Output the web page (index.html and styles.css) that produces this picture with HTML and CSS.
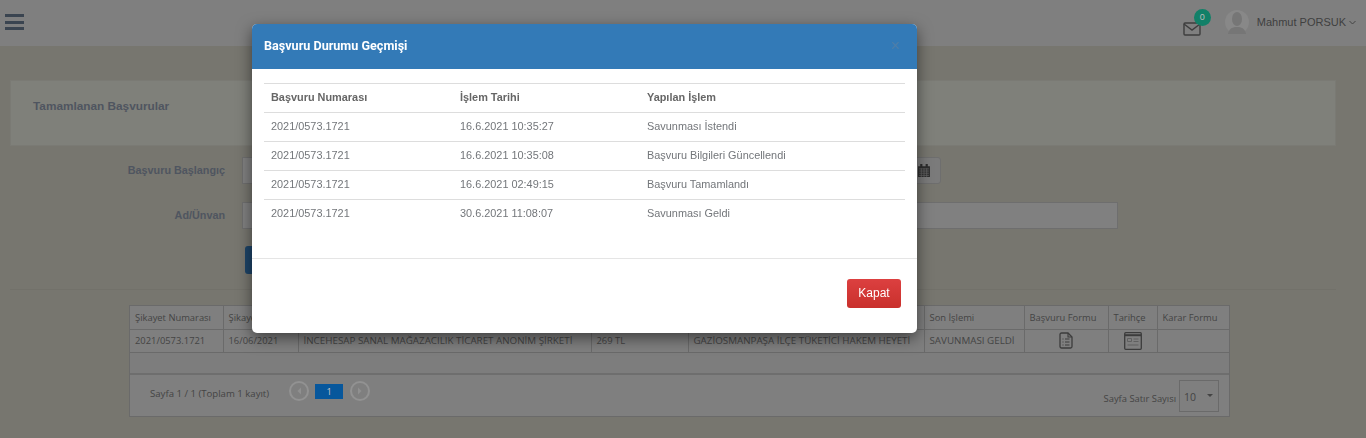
FILE: index.html
```html
<!doctype html>
<html>
<head>
	<meta charset="utf-8">
	<title>Tamamlanan Başvurular</title>
	<link rel="stylesheet" href="styles.css">
</head>
<body>
	<header class="topbar">
		<div class="menu-icon"><span></span><span></span><span></span></div>
		<div class="topbar-right">
			<div class="mail">
				<svg width="18" height="14" viewBox="0 0 18 14"><rect x="1" y="1" width="16" height="12" rx="1" fill="none" stroke="#3e3e3e" stroke-width="1.4"/><path d="M1 2l8 6 8-6" fill="none" stroke="#3e3e3e" stroke-width="1.4"/></svg>
				<span class="mail-badge">0</span>
			</div>
			<svg class="avatar" width="24" height="26" viewBox="0 0 24 26"><circle cx="12" cy="13" r="12" fill="#888"/><ellipse cx="12" cy="10" rx="5" ry="7" fill="#767676"/><path d="M3 25c1-6 5-7 9-7s8 1 9 7z" fill="#767676"/></svg>
			<span class="user-name">Mahmut PORSUK</span>
			<svg class="caret" width="7" height="5" viewBox="0 0 7 5"><path d="M.5 1l3 3 3-3" fill="none" stroke="#444"/></svg>
		</div>
	</header>

	<main class="content">
		<div class="page-title"><h2>Tamamlanan Başvurular</h2></div>

		<form class="filter">
			<div class="filter-row">
				<label>Başvuru Başlangıç</label>
				<div class="input date-input"></div>
				<span class="date-btn">
					<svg width="12" height="13" viewBox="0 0 11 12"><path d="M2 0h2v2h3V0h2v2h2v10H0V2h2z" fill="#2e2e2e"/><path d="M1 4.500h9M1 6.500h9M1 8.500h9M1 10.500h9M3 4v8M5.500 4v8M8 4v8" stroke="#666" stroke-width=".7"/></svg>
				</span>
			</div>
			<div class="filter-row">
				<label>Ad/Ünvan</label>
				<div class="input wide-input"></div>
			</div>
			<div class="filter-row">
				<label></label>
				<span class="search-btn"></span>
			</div>
		</form>

		<div class="grid-wrap">
			<div class="grid">
				<table>
					<tr>
						<th class="c1">Şikayet Numarası</th>
						<th class="c2">Şikayet Tarihi</th>
						<th class="c3">Firma</th>
						<th class="c4">Tutar</th>
						<th class="c5">Hakem Heyeti</th>
						<th class="c6">Son İşlemi</th>
						<th class="c7">Başvuru Formu</th>
						<th class="c8">Tarihçe</th>
						<th class="c9">Karar Formu</th>
					</tr>
					<tr>
						<td>2021/0573.1721</td>
						<td>16/06/2021</td>
						<td class="upper">İNCEHESAP SANAL MAĞAZACILIK TİCARET ANONİM ŞİRKETİ</td>
						<td>269 TL</td>
						<td class="upper">GAZİOSMANPAŞA İLÇE TÜKETİCİ HAKEM HEYETİ</td>
						<td class="upper">SAVUNMASI GELDİ</td>
						<td class="icon-cell">
							<svg width="14" height="17" viewBox="0 0 14 17"><path d="M1 2.500A1.500 1.500 0 0 1 2.500 1H9l4 4v9.500A1.500 1.500 0 0 1 11.500 16h-9A1.500 1.500 0 0 1 1 14.500z" fill="none" stroke="#3c3c3c" stroke-width="1.300"/><path d="M9 1v4h4M3.500 7h1M6 7h4.500M3.500 10h1M6 10h4.500M3.500 13h1M6 13h4.500" fill="none" stroke="#3c3c3c" stroke-width="1.100"/></svg>
						</td>
						<td class="icon-cell">
							<svg width="18" height="18" viewBox="0 0 18 18"><rect x=".7" y=".7" width="16.600" height="16.600" rx="1" fill="none" stroke="#3c3c3c" stroke-width="1.300"/><path d="M1 3.200h16" stroke="#3c3c3c" stroke-width="2"/><path d="M3.500 6.500h4v3h-4zM9.500 7h5M9.500 9.500h5M3.500 13h11" fill="none" stroke="#606060" stroke-width="1"/></svg>
						</td>
						<td></td>
					</tr>
				</table>
				<div class="grid-spacer"></div>
				<div class="pager">
					<span class="pager-info">Sayfa 1 / 1 (Toplam 1 kayıt)</span>
					<span class="pager-arrow"><svg width="6" height="8" viewBox="0 0 6 8"><path d="M5 .5L1.500 4 5 7.500z" fill="#909090"/></svg></span>
					<span class="pager-current">1</span>
					<span class="pager-arrow"><svg width="6" height="8" viewBox="0 0 6 8"><path d="M1 .5L4.500 4 1 7.500z" fill="#909090"/></svg></span>
					<span class="pager-size-label">Sayfa Satır Sayısı</span>
					<span class="pager-size">10<i class="select-caret"></i></span>
				</div>
			</div>
		</div>
	</main>

	<div class="modal">
		<div class="modal-header">
			<h4>Başvuru Durumu Geçmişi</h4>
			<span class="modal-close">×</span>
		</div>
		<div class="modal-body">
			<table class="history">
				<tr><th class="h1">Başvuru Numarası</th><th class="h2">İşlem Tarihi</th><th>Yapılan İşlem</th></tr>
				<tr><td>2021/0573.1721</td><td>16.6.2021 10:35:27</td><td>Savunması İstendi</td></tr>
				<tr><td>2021/0573.1721</td><td>16.6.2021 10:35:08</td><td>Başvuru Bilgileri Güncellendi</td></tr>
				<tr><td>2021/0573.1721</td><td>16.6.2021 02:49:15</td><td>Başvuru Tamamlandı</td></tr>
				<tr><td>2021/0573.1721</td><td>30.6.2021 11:08:07</td><td>Savunması Geldi</td></tr>
			</table>
		</div>
		<div class="modal-footer">
			<span class="btn-close">Kapat</span>
		</div>
	</div>
</body>
</html>
```

FILE: styles.css
```css
/* page is drawn with the dimmed colours of the open modal */
html, body {
	margin: 0;
	height: 438px;
	overflow: hidden;
}
body {
	background: #77766f;
	font-family: "Liberation Sans", Arial, sans-serif;
	font-size: 12px;
	color: #333;
}
.topbar {
	height: 46px;
	background: #7f7f7f;
	display: flex;
	justify-content: space-between;
	box-sizing: border-box;
}
.menu-icon {
	padding: 14px 0 0 5px;
}
.menu-icon span {
	display: block;
	width: 19px;
	height: 3px;
	background: #3a4450;
	margin-bottom: 3.5px;
}
.topbar-right {
	display: flex;
	align-items: center;
	height: 44px;
	padding-right: 10px;
}
.mail {
	position: relative;
	width: 18px;
	height: 14px;
	margin: 13px 24px 0 0;
}
.mail svg {
	display: block;
}
.mail-badge {
	position: absolute;
	left: 11px;
	top: -13px;
	width: 17px;
	height: 17px;
	border-radius: 50%;
	background: #128068;
	color: #bbb;
	font-size: 9px;
	line-height: 17px;
	text-align: center;
}
.avatar {
	margin-right: 8px;
}
.user-name {
	font-size: 11px;
	color: #404040;
	margin-right: 3px;
}
.content {
	padding: 34px 30px 0 10px;
}
.page-title {
	height: 66px;
	background: #7f807a;
	border: 1px solid #7a7a74;
	box-sizing: border-box;
	padding: 17px 22px;
}
.page-title h2 {
	margin: 0;
	font-size: 11.8px;
	line-height: 16px;
	color: #4f5560;
}
.filter {
	padding-top: 11px;
	height: 144px;
	box-sizing: border-box;
	border-bottom: 1px solid #72716a;
}
.filter-row {
	display: flex;
	margin-bottom: 18px;
	height: 27px;
}
.filter-row label {
	width: 215px;
	text-align: right;
	font-size: 10.8px;
	font-weight: bold;
	line-height: 26px;
	color: #4f5560;
	margin-right: 17px;
}
.input {
	height: 27px;
	background: #808080;
	border: 1px solid #6e6e6e;
	box-sizing: border-box;
}
.date-input {
	width: 665px;
}
.wide-input {
	width: 876px;
}
.date-btn {
	width: 34px;
	height: 27px;
	background: #7b7b7b;
	border: 1px solid #6e6e6e;
	border-radius: 0 3px 3px 0;
	box-sizing: border-box;
	display: flex;
	align-items: center;
	justify-content: center;
}
.search-btn {
	width: 40px;
	height: 28px;
	margin: -1px 0 0 3px;
	background: #1d4468;
	border-radius: 3px;
}
.grid-wrap {
	padding: 15px 0 0 119px;
}
.grid {
	width: 1101px;
	height: 112px;
	box-sizing: border-box;
	background: #7f7f7f;
	border: 1px solid #6a6a6a;
	font-family: "Open Sans", sans-serif;
	font-size: 9.4px;
	color: #444;
}
.grid table {
	border-collapse: collapse;
	table-layout: fixed;
	width: 1099px;
}
.grid th, .grid td {
	box-sizing: border-box;
	height: 23px;
	border: 1px solid #6a6a6a;
	font-weight: normal;
	padding: 0 5px;
	white-space: nowrap;
	overflow: hidden;
	text-align: left;
	border-top: 0;
}
.grid th:first-child, .grid td:first-child { border-left: 0; }
.grid th:last-child, .grid td:last-child { border-right: 0; }
.grid td.upper {
	font-size: 9.8px;
}
.c1 { width: 93px; }
.c2 { width: 75px; }
.c3 { width: 293px; }
.c4 { width: 97px; }
.c5 { width: 236px; }
.c6 { width: 100px; }
.c7 { width: 84px; }
.c8 { width: 49px; }
.c9 { width: 72px; }
.grid td.icon-cell {
	text-align: center;
	padding: 0;
}
.icon-cell svg {
	display: block;
	margin: 0 auto;
}
.grid-spacer {
	height: 20px;
	background: #7d7d7d;
	border-bottom: 2px solid #6e6e6e;
}
.pager {
	display: flex;
	align-items: flex-start;
	height: 40px;
	padding: 5px 10px 0 20px;
}
.pager-info {
	margin: 7px 20px 0 0;
	font-size: 9.6px;
}
.pager-arrow {
	width: 20px;
	height: 20px;
	margin-top: 1px;
	border: 2px solid #929292;
	border-radius: 50%;
	box-sizing: border-box;
	display: flex;
	align-items: center;
	justify-content: center;
}
.pager-current {
	width: 28px;
	height: 15px;
	margin: 4px 7px 0 6px;
	background: #07579c;
	color: #c4c4c4;
	text-align: center;
	line-height: 15px;
}
.pager-size-label {
	margin: 12px 3px 0 auto;
}
.pager-size {
	width: 40px;
	height: 32px;
	border: 1px solid #6a6a6a;
	box-sizing: border-box;
	padding-left: 4px;
	line-height: 32px;
	font-size: 10.5px;
	position: relative;
}
.select-caret {
	position: absolute;
	right: 5px;
	top: 13px;
	border: 3px solid transparent;
	border-top-color: #444;
}
.modal {
	position: fixed;
	left: 252px;
	top: 24px;
	width: 665px;
	height: 309px;
	background: #fff;
	border-radius: 5px;
	box-shadow: 0 5px 15px rgba(0, 0, 0, .5);
	overflow: hidden;
	display: flex;
	flex-direction: column;
}
.modal-header {
	height: 45px;
	background: #337ab7;
	color: #fff;
	display: flex;
	align-items: center;
	justify-content: space-between;
	padding: 0 17px 2px 12px;
	box-sizing: border-box;
	flex: none;
}
.modal-header h4 {
	margin: 0;
	font-size: 12.6px;
	font-family: Roboto, sans-serif;
	font-weight: bold;
}
.modal-close {
	font-size: 16px;
	color: #4f7ea8;
}
.modal-body {
	height: 190px;
	padding: 14px 12px 0;
	box-sizing: border-box;
	border-bottom: 1px solid #e5e5e5;
	flex: none;
}
.history {
	width: 100%;
	border-collapse: collapse;
	table-layout: fixed;
	font-size: 10.9px;
	color: #73767a;
}
.history th, .history td {
	height: 29px;
	padding: 0 7px 2px;
	text-align: left;
	border-top: 1px solid #ddd;
	box-sizing: border-box;
}
.history th {
	color: #666;
}
.h1 { width: 189px; }
.h2 { width: 187px; }
.modal-footer {
	padding: 20px 16px 0;
	display: flex;
	justify-content: flex-end;
}
.btn-close {
	width: 54px;
	height: 29px;
	line-height: 29px;
	text-align: center;
	background: linear-gradient(#dc4040, #c9302c);
	border-radius: 3px;
	color: #fff;
	font-size: 12px;
}
```
